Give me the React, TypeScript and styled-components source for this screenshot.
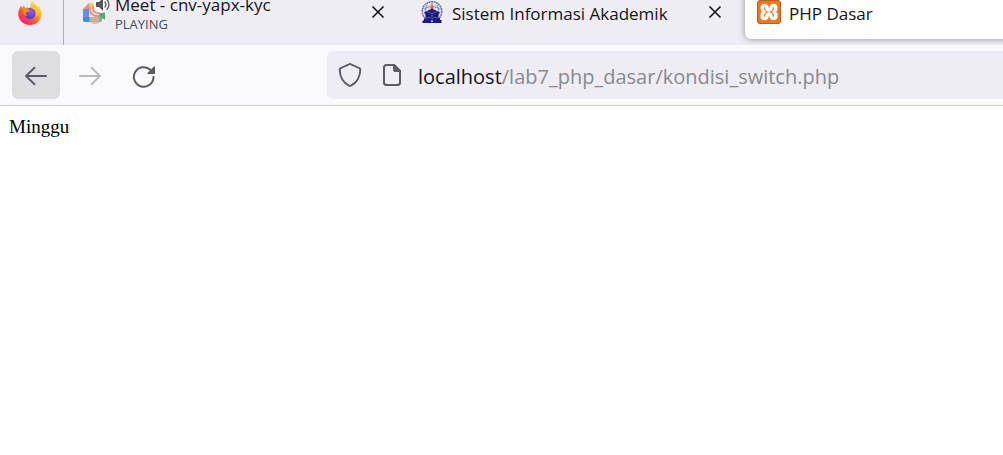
import React from "react";
import styled, { createGlobalStyle } from "styled-components";

const GlobalStyle = createGlobalStyle`
  * { box-sizing: border-box; }
  body { margin: 0; background: #ffffff; }
  button, input { font: inherit; color: inherit; border: 0; padding: 0; background: none; }
  svg { display: block; flex: none; }
`;

const Browser = styled.div`
  min-height: 100vh;
  overflow: hidden;
  font-family: "Open Sans", "Noto Sans", sans-serif;
  color: #15141a;
`;

const TabStrip = styled.header`
  display: flex;
  align-items: flex-end;
  height: 45px;
  overflow: hidden;
  background: #eeedf3;
`;

const PinnedArea = styled.div`
  flex: none;
  display: flex;
  align-items: flex-end;
  justify-content: flex-end;
  width: 64px;
  height: 64px;
  margin-right: 7px;
  padding: 0 21px 20px 0;
  border-right: 1px solid #aeaeb3;
`;

const PinnedTab = styled.button`
  display: flex;
`;

const TabList = styled.div`
  display: flex;
  gap: 6px;
  padding-bottom: 6px;
`;

const Tab = styled.div<{ $active?: boolean }>`
  flex: none;
  display: flex;
  align-items: center;
  width: 331px;
  height: 54px;
  padding: 0 12px;
  border-radius: 6px;
  background: ${(p) => (p.$active ? "#ffffff" : "transparent")};
  box-shadow: ${(p) => (p.$active ? "0 0 6px rgba(60, 60, 70, 0.55)" : "none")};
`;

const TabButton = styled.button`
  flex: 1;
  display: flex;
  align-items: center;
  gap: 8px;
  text-align: left;
  white-space: nowrap;
`;

const TabText = styled.span`
  display: flex;
  flex-direction: column;
  padding-top: 3px;
`;

const TabTitle = styled.span`
  font-size: 17px;
  line-height: 20px;
`;

const TabStatus = styled.span`
  font-size: 13px;
  line-height: 18px;
  color: #4a4a52;
`;

const CloseButton = styled.button`
  display: flex;
  padding: 5px;
`;

const Toolbar = styled.nav`
  display: flex;
  align-items: center;
  height: 61px;
  padding-left: 12px;
  background: #f9f9fb;
  border-bottom: 1px solid #cccccf;
`;

const NavButtons = styled.div`
  flex: none;
  display: flex;
  gap: 6px;
  width: 315px;
`;

const NavButton = styled.button<{ $filled?: boolean }>`
  display: flex;
  align-items: center;
  justify-content: center;
  width: 48px;
  height: 48px;
  border-radius: 6px;
  color: #5b5b66;
  background: ${(p) => (p.$filled ? "#dddde2" : "transparent")};
  &:disabled { color: #b9b9c0; }
`;

const AddressBar = styled.form`
  flex: 1;
  display: flex;
  align-items: center;
  height: 48px;
  padding-left: 11px;
  border-radius: 6px 0 0 6px;
  background: #eeedf3;
  font-size: 20px;
  line-height: 28px;
`;

const AddressIcons = styled.div`
  display: flex;
  gap: 20px;
  margin-right: 16px;
  color: #5b5b66;
`;

const AddressText = styled.div`
  flex: 1;
  display: flex;
  padding-top: 3px;
`;

const AddressInput = styled.input`
  flex: 1;
  min-width: 0;
  height: 28px;
  color: #8a898e;
  outline: 0;
`;

const Page = styled.main`
  padding: 10px 9px;
  font-family: "Liberation Serif", serif;
  font-size: 19px;
  line-height: 22px;
  color: #000000;
`;

const FirefoxIcon = () => (
  <svg width="24" height="24" viewBox="0 0 24 24" aria-hidden="true">
    <defs>
      <linearGradient id="flame" x1="0.85" y1="0.05" x2="0.2" y2="0.95">
        <stop offset="0" stopColor="#fff44f" />
        <stop offset="0.35" stopColor="#ffb52e" />
        <stop offset="0.65" stopColor="#ff5a35" />
        <stop offset="1" stopColor="#f5177c" />
      </linearGradient>
      <radialGradient id="globe" cx="0.6" cy="0.3" r="0.7">
        <stop offset="0" stopColor="#9059ff" />
        <stop offset="1" stopColor="#5b38b0" />
      </radialGradient>
    </defs>
    <path
      fill="url(#flame)"
      d="M15 0c1 2 4 4 5 6l1-1c2 3 3 6 2.500 9-.8 6-5.500 10-11.500 10S.5 19.500.3 13.500C.2 10 1.200 6.500 3.500 4.500L4 7l2-3 1 3c2-.8 4-.5 5 0 0-3 1-5.500 3-7Z"
    />
    <circle cx="12" cy="12.500" r="5.500" fill="url(#globe)" />
    <path fill="#ff8a23" d="M5 9c2-2 4-2 7 .2-1 1.800-3 1.300-4 2.300-.8 1 0 2.500 1.400 3C7 16 4.500 12.500 5 9Z" />
    <path fill="#ffc331" d="M15 7c3 1 4 4 3.300 7 1.700-1 2.200-3.500 1.700-6-1-2-3-3-4-5-.7 1-1 2.500-1 4Z" />
  </svg>
);

const MeetIcon = () => (
  <svg width="28" height="26" viewBox="0 0 28 26" aria-hidden="true">
    <path fill="#ec8a80" d="M0 9 6 3v6Z" />
    <path fill="#f6cc5c" d="M6 3h12v6H6Z" />
    <path fill="#5c94ee" d="M0 9h6v8H0Z" />
    <path fill="#4a86e4" d="M0 17h6v5H2q-2 0-2-2Z" />
    <path fill="#6bbd83" d="M6 16h10v-4h3v8q0 2-2 2H6Z" />
    <path fill="#4fa96c" d="m16 15 6-5v10l-6-4Z" />
    <path fill="#f3dcda" d="M6 9h10v8H6Z" />
    <path fill="#e8a79d" opacity=".8" d="M7 17h9v6q-4 2-8 0Z" />
    <path
      fill="none"
      stroke="#e08e86"
      strokeWidth="1.700"
      d="M7 7c-1 6 3 10 10 9M10 6c-1 5 2 8 7 7"
    />
    <circle cx="19" cy="4.500" r="8.500" fill="#ffffff" />
    <path fill="#55555d" d="M13 2h3l4-4v13l-4-4h-3Z" />
    <path
      fill="none"
      stroke="#55555d"
      strokeWidth="1.300"
      strokeLinecap="round"
      d="M22 2q2 2.500 0 5M24-.5q4 5 0 10"
    />
  </svg>
);

const CampusIcon = () => (
  <svg width="24" height="24" viewBox="0 0 24 24" aria-hidden="true">
    <circle cx="12" cy="11.500" r="9.800" fill="#dcdcea" stroke="#7272a8" strokeWidth="1.500" strokeDasharray="2 .5" />
    <path fill="none" stroke="#8888b6" strokeWidth=".9" d="M4 9q8-5 16 0M7 5q-3 5-1 10M17 5q3 5 1 10M12 2v8" />
    <path fill="#ee5a4c" d="M12 4.500q2.500 2.500 1 4.500h-2q-1.500-2 1-4.500Z" />
    <path
      fill="#1a1a7c"
      d="m12 8.500 6 3 2 1-1.500 2v3.500h1.500v2h1.500V23h-19v-2.500H4v-2h1.500V14.500L4 12.500l2-1Z"
    />
    <path fill="none" stroke="#6a6ab0" strokeWidth=".8" d="m6.500 11.500 5.500 2 5.500-2M6 18q4-1.500 6 .5 2-2 6-.5M12 13.500v4" />
    <path fill="#ffffff" d="M10.800 20.500h2.400L12 22.500Z" />
  </svg>
);

const XamppIcon = () => (
  <svg width="24" height="24" viewBox="0 0 24 24" aria-hidden="true">
    <rect x=".5" y=".5" width="23" height="23" rx="2.500" fill="#ef7622" stroke="#bd5c20" />
    <path
      fill="none"
      stroke="#ffffff"
      strokeWidth="3.400"
      strokeLinecap="round"
      strokeLinejoin="round"
      d="M10 9.500V7.700c0-3-4.800-3-4.800.3 0 2 .5 3 1.800 4-1.500 1-2 2.300-2 4 0 3.200 5 3.200 5 .2 0-1.500.5-2.200 2-2.200s2 .7 2 2.200c0 3 5 3 5-.2 0-1.700-.5-3-2-4 1.300-1 1.800-2 1.800-4 0-3.300-4.800-3.300-4.800-.3 0 1.600-.5 2.300-2 2.300s-2-.7-2-2.300"
    />
  </svg>
);

const CloseIcon = () => (
  <svg width="14" height="14" viewBox="0 0 14 14" fill="none" stroke="#15141a" strokeWidth="1.600" aria-hidden="true">
    <path d="m1.500 1.500 11 11m0-11-11 11" />
  </svg>
);

const ArrowIcon = ({ forward }: { forward?: boolean }) => (
  <svg
    width="24"
    height="24"
    viewBox="0 0 24 24"
    fill="none"
    stroke="currentColor"
    strokeWidth="1.900"
    strokeLinecap="round"
    strokeLinejoin="round"
    aria-hidden="true"
  >
    <path d={forward ? "M2 13h20M13.500 4.800 22 13l-8.500 8.200" : "M22 13H2M10.500 4.800 2 13l8.500 8.200"} />
  </svg>
);

const ReloadIcon = () => (
  <svg width="24" height="26" viewBox="0 0 24 26" fill="none" stroke="currentColor" strokeWidth="2" strokeLinecap="round" aria-hidden="true">
    <path d="M21.500 15A9.800 9.800 0 1 1 18.600 8" />
    <path fill="currentColor" stroke="none" d="M23 5v6.300q0 .7-.7.700H16q-1.300 0-.5-1L22 4.500q1-.7 1 .5Z" />
  </svg>
);

const ShieldIcon = () => (
  <svg width="24" height="26" viewBox="0 0 24 26" fill="none" stroke="currentColor" strokeWidth="1.900" strokeLinejoin="round" aria-hidden="true">
    <path d="M12 2q.6 0 1 .3L21 6q1.400.5 1.300 2C22 15 19 20.500 13 23.600q-1 .5-2 0C5 20.500 2 15 1.700 8 1.600 6.500 3 6 3 6l8-3.700q.4-.3 1-.3Z" />
  </svg>
);

const PageIcon = () => (
  <svg width="20" height="26" viewBox="0 0 20 26" fill="none" stroke="currentColor" strokeWidth="2" strokeLinejoin="round" aria-hidden="true">
    <path d="M4.500 3H12l6 6v11.500q0 2.500-2.500 2.500h-11Q2 23 2 20.500v-15Q2 3 4.500 3Z" />
    <path fill="currentColor" d="M12 3v5q0 1 1 1h5Z" />
  </svg>
);

interface TabData {
  title: string;
  status?: string;
  icon: React.ReactNode;
  active?: boolean;
}

const tabs: TabData[] = [
  { title: "Meet - cnv-yapx-kyc", status: "PLAYING", icon: <MeetIcon /> },
  { title: "Sistem Informasi Akademik", icon: <CampusIcon /> },
  { title: "PHP Dasar", icon: <XamppIcon />, active: true },
];

const IconSlot = styled.span`
  display: flex;
  width: 24px;
  height: 24px;
`;

export default function App() {
  return (
    <Browser>
      <GlobalStyle />
      <TabStrip>
        <PinnedArea>
          <PinnedTab aria-label="Firefox View">
            <FirefoxIcon />
          </PinnedTab>
        </PinnedArea>
        <TabList role="tablist">
          {tabs.map((tab) => (
            <Tab key={tab.title} $active={tab.active}>
              <TabButton role="tab" aria-selected={!!tab.active}>
                <IconSlot>{tab.icon}</IconSlot>
                <TabText>
                  <TabTitle>{tab.title}</TabTitle>
                  {tab.status && <TabStatus>{tab.status}</TabStatus>}
                </TabText>
              </TabButton>
              <CloseButton aria-label={`Close ${tab.title}`}>
                <CloseIcon />
              </CloseButton>
            </Tab>
          ))}
        </TabList>
      </TabStrip>
      <Toolbar>
        <NavButtons>
          <NavButton $filled aria-label="Back">
            <ArrowIcon />
          </NavButton>
          <NavButton disabled aria-label="Forward">
            <ArrowIcon forward />
          </NavButton>
          <NavButton aria-label="Reload">
            <ReloadIcon />
          </NavButton>
        </NavButtons>
        <AddressBar>
          <AddressIcons>
            <ShieldIcon />
            <PageIcon />
          </AddressIcons>
          <AddressText>
            <label htmlFor="address">localhost</label>
            <AddressInput id="address" type="text" defaultValue="/lab7_php_dasar/kondisi_switch.php" />
          </AddressText>
        </AddressBar>
      </Toolbar>
      <Page>Minggu</Page>
    </Browser>
  );
}
